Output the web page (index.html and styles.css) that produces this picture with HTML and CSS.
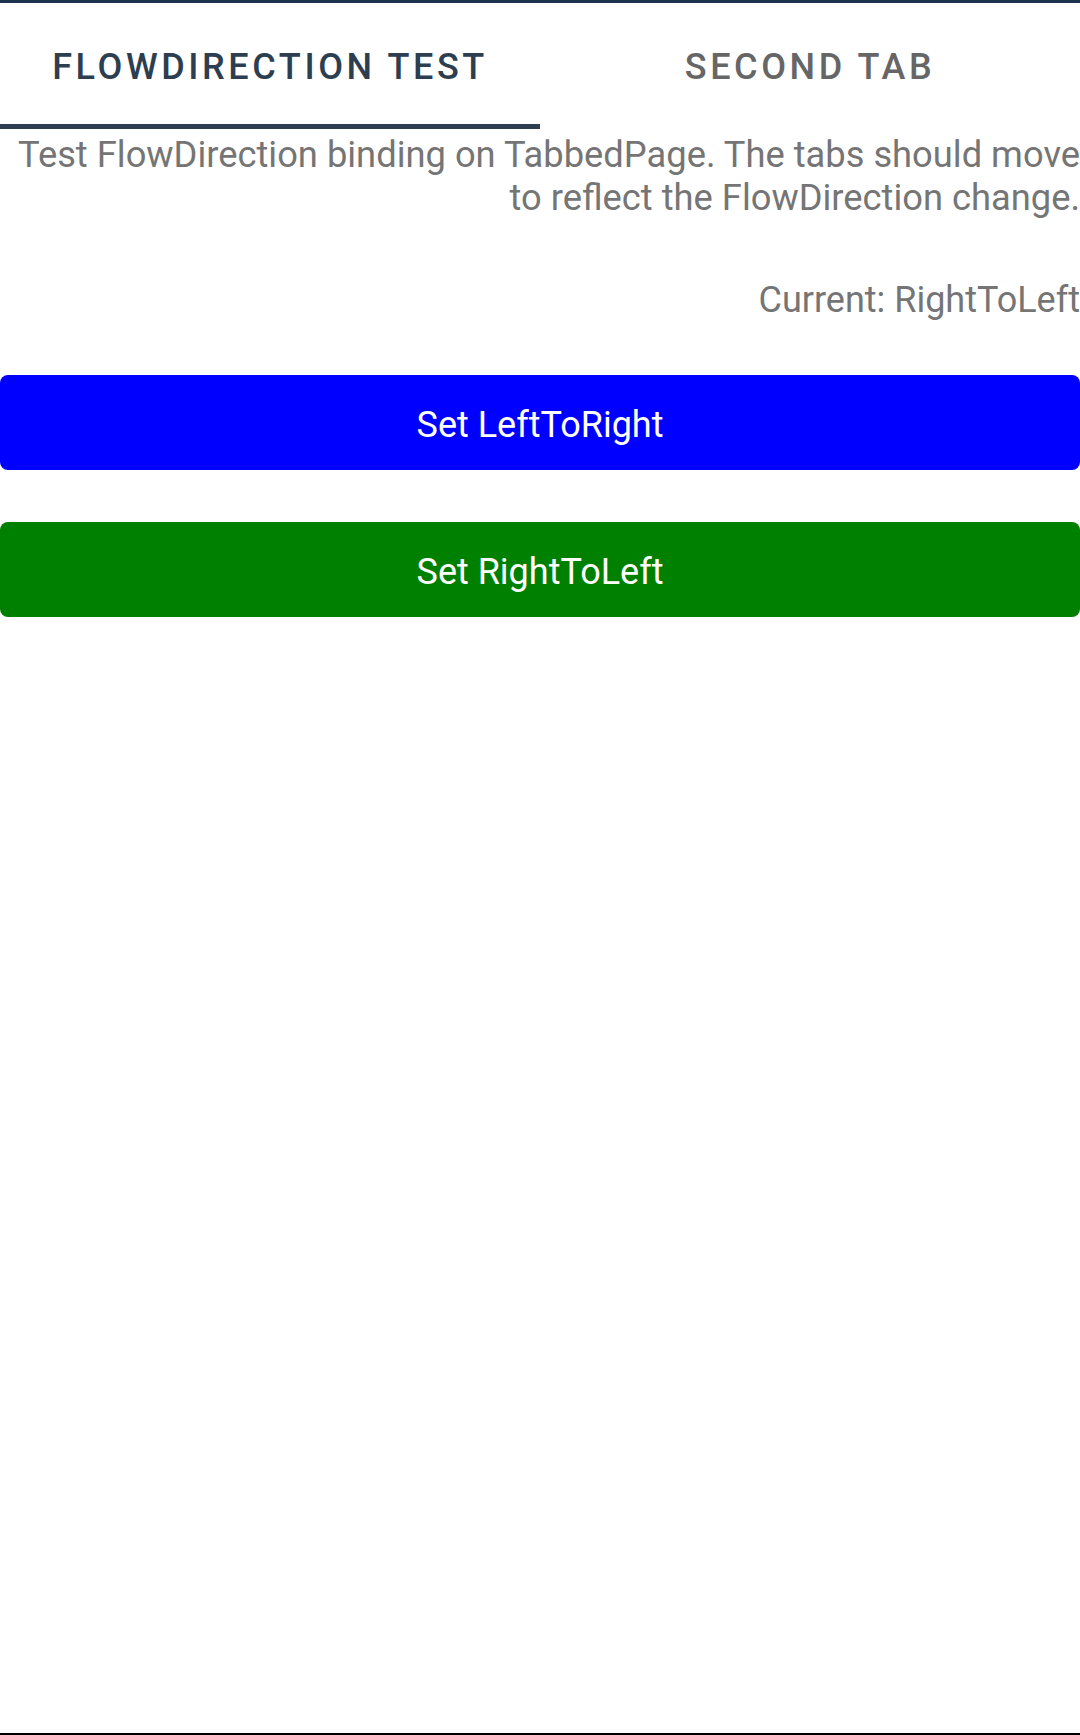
FILE: index.html
```html
<!DOCTYPE html>
<html>
<head>
<meta charset="utf-8">
<link rel="stylesheet" href="styles.css">
</head>
<body>
<div class="screen">
  <div class="topline"></div>
  <div class="tabs">
    <div class="tab active"><span>FlowDirection Test</span></div>
    <div class="tab"><span>Second Tab</span></div>
  </div>
  <div class="content">
    <p class="desc">Test FlowDirection binding on TabbedPage. The tabs should move to reflect the FlowDirection change.</p>
    <p class="current">Current: RightToLeft</p>
    <button class="btn btn-blue">Set LeftToRight</button>
    <button class="btn btn-green">Set RightToLeft</button>
  </div>
  <div class="bottomline"></div>
</div>
</body>
</html>
```
FILE: styles.css
```css
html, body {
  margin: 0;
  padding: 0;
  background: #ffffff;
}
.screen {
  height: 1735px;
  display: flex;
  flex-direction: column;
  font-family: Roboto, "Liberation Sans", sans-serif;
}
.topline {
  height: 3px;
  background: #1c3350;
}
.tabs {
  display: flex;
  height: 126px;
}
.tab {
  flex: 1 1 50%;
  display: flex;
  align-items: center;
  justify-content: center;
  box-sizing: border-box;
  font-size: 36px;
  font-weight: 500;
  letter-spacing: 3.6px;
  text-transform: uppercase;
  color: #666666;
  padding-top: 7px;
  padding-bottom: 5px;
}
.tab.active {
  color: #2c3e50;
  border-bottom: 5px solid #2c3e50;
  padding-bottom: 0;
}
.content {
  display: flex;
  flex-direction: column;
  padding-top: 4px;
}
.desc {
  margin: 0;
  text-align: right;
  font-size: 36.3px;
  line-height: 43px;
  color: #757575;
}
.current {
  margin: 60px 0 0 0;
  text-align: right;
  font-size: 36px;
  line-height: 43px;
  color: #757575;
}
.btn {
  display: block;
  width: 100%;
  height: 95px;
  border: none;
  border-radius: 8px;
  color: #ffffff;
  font-family: Roboto, "Liberation Sans", sans-serif;
  font-size: 36px;
  padding: 4px 0 0 0;
}
.btn-blue {
  background: #0000ff;
  margin-top: 53px;
}
.btn-green {
  background: #008000;
  margin-top: 52px;
}
.bottomline {
  margin-top: auto;
  height: 2px;
  background: #000000;
}
```
